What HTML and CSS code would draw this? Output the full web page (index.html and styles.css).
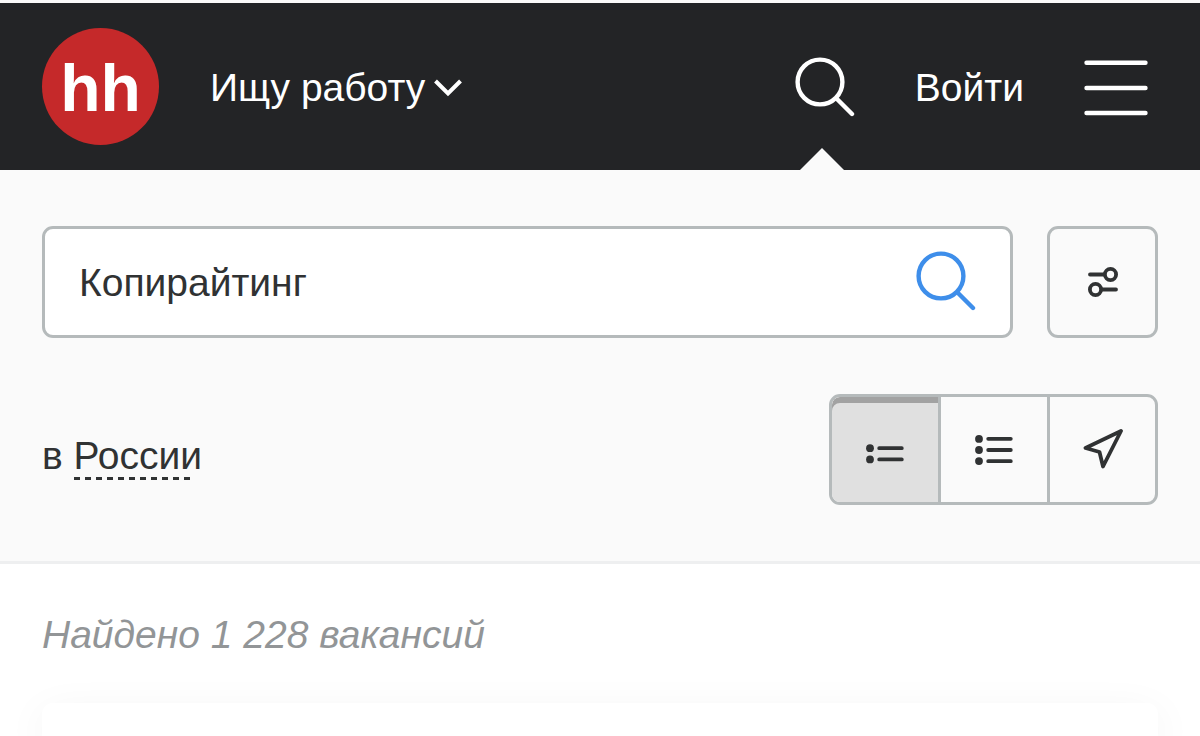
FILE: index.html
```html
<!DOCTYPE html>
<html lang="ru">
<head>
    <meta charset="UTF-8">
    <meta name="viewport" content="width=device-width, initial-scale=1.0">
    <title>Работа копирайтером в России</title>
    <link rel="stylesheet" href="styles.css">
</head>
<body>
    <header class="header">
        <a href="#" class="logo">hh</a>
        <button type="button" class="role-switch">
            Ищу работу
            <svg width="28" height="20" viewBox="0 0 28 20" fill="none" stroke="currentColor" stroke-width="4">
                <path d="M1.500 3 14 15.500 26.500 3"/>
            </svg>
        </button>

        <nav class="header-nav">
            <button type="button" class="nav-search" aria-label="Поиск">
                <svg width="60" height="62" viewBox="0 0 60 62" fill="none" stroke="currentColor" stroke-width="4.4" stroke-linecap="round">
                    <circle cx="25" cy="25" r="22.4"/>
                    <path d="M41.500 41.500 57 57"/>
                </svg>
            </button>
            <a href="#" class="login">Войти</a>
            <button type="button" class="burger" aria-label="Меню">
                <svg width="64" height="56" viewBox="0 0 64 56" fill="none" stroke="currentColor" stroke-width="4.4" stroke-linecap="round">
                    <path d="M2.500 2.700h59M2.500 28h59M2.500 53h59"/>
                </svg>
            </button>
        </nav>
    </header>

    <section class="search-panel">
        <form class="search-row">
            <div class="search-box">
                <input type="text" value="Копирайтинг" aria-label="Профессия, должность или компания">
                <button type="button" class="search-submit" aria-label="Найти">
                    <svg width="60" height="62" viewBox="0 0 60 62" fill="none" stroke="currentColor" stroke-width="4.4" stroke-linecap="round">
                        <circle cx="25" cy="25" r="22.4"/>
                        <path d="M41.500 41.500 57 57"/>
                    </svg>
                </button>
            </div>
            <button type="button" class="filter-btn" aria-label="Фильтры">
                <svg width="30" height="30" viewBox="0 0 30 30" fill="none" stroke="currentColor" stroke-width="3.8" stroke-linecap="round">
                    <circle cx="22.5" cy="7.5" r="5.6"/>
                    <circle cx="7.5" cy="22.5" r="5.6"/>
                    <path d="M2 7.500h14M14 22.500h14"/>
                </svg>
            </button>
        </form>

        <div class="region-row">
            <p class="region">в <a href="#">России</a></p>
            <div class="view-switch">
                <button type="button" class="active" aria-label="Кратко">
                    <svg width="38" height="20" viewBox="0 0 38 20" fill="none" stroke="currentColor" stroke-width="3.8" stroke-linecap="round">
                        <path d="M13.200 4.200h22.600M13.200 15.400h22.600"/>
                        <circle cx="4" cy="4.2" r="3.9" fill="currentColor" stroke="none"/>
                        <circle cx="4" cy="15.4" r="3.9" fill="currentColor" stroke="none"/>
                    </svg>
                </button>
                <button type="button" aria-label="Подробно">
                    <svg width="38" height="30" viewBox="0 0 38 30" fill="none" stroke="currentColor" stroke-width="3.8" stroke-linecap="round">
                        <path d="M13.200 3.800h22.600M13.200 15h22.600M13.200 26.200h22.600"/>
                        <circle cx="4" cy="3.9" r="3.9" fill="currentColor" stroke="none"/>
                        <circle cx="4" cy="15" r="3.9" fill="currentColor" stroke="none"/>
                        <circle cx="4" cy="26.1" r="3.9" fill="currentColor" stroke="none"/>
                    </svg>
                </button>
                <button type="button" aria-label="На карте">
                    <svg width="40" height="42" viewBox="0 0 40 42" fill="none" stroke="currentColor" stroke-width="3.8" stroke-linecap="round" stroke-linejoin="round">
                        <path d="M38 2 2.500 19l14 4L20 37.500z"/>
                    </svg>
                </button>
            </div>
        </div>
    </section>

    <main class="results">
        <h1>Найдено 1 228 вакансий</h1>
        <div class="card"></div>
    </main>
</body>
</html>
```
FILE: styles.css
```css
:root {
    --dark: #232426;
    --text: #303233;
    --muted: #929597;
    --border: #b5babb;
    --panel: #fafafa;
    --red: #c5292a;
    --blue: #3e8eea;
}

* {
    box-sizing: border-box;
}

body {
    font-family: "Liberation Sans", Arial, sans-serif;
    font-size: 39px;
    line-height: 44px;
    color: var(--text);
    background-color: #fff;
    margin: 0;
    min-height: 100vh;
    display: flex;
    flex-direction: column;
}

button,
input {
    font: inherit;
    color: inherit;
    background: none;
    border: none;
    margin: 0;
    padding: 0;
}

button {
    cursor: pointer;
    display: flex;
    align-items: center;
    justify-content: center;
}

svg {
    display: block;
    flex: none;
}

.header {
    display: flex;
    align-items: stretch;
    height: 170px;
    padding: 0 52px 0 42px;
    border-top: 3px solid var(--panel);
    background-color: var(--dark);
    color: #fff;
}

.logo {
    align-self: center;
    width: 117px;
    height: 117px;
    border-radius: 50%;
    background-color: var(--red);
    color: #fff;
    font-size: 66px;
    font-weight: bold;
    line-height: 120px;
    text-align: center;
    text-decoration: none;
}

.role-switch {
    gap: 9px;
    margin-left: 51px;
    padding-top: 2px;
}

.header-nav {
    display: flex;
    align-items: center;
    gap: 60px;
    margin-left: auto;
    padding-top: 2px;
}

.nav-search {
    position: relative;
    align-self: stretch;
}

/* pointer to the open search panel */
.nav-search::after {
    content: "";
    position: absolute;
    bottom: 0;
    left: 50%;
    margin-left: -25px;
    border: 22px solid transparent;
    border-top: none;
    border-bottom-color: var(--panel);
}

.login {
    color: #fff;
    text-decoration: none;
}

.search-panel {
    padding: 56px 42px;
    background-color: var(--panel);
    border-bottom: 3px solid #eeeff0;
}

.search-row {
    display: flex;
    gap: 34px;
}

.search-box {
    flex: 1;
    display: flex;
    height: 112px;
    padding: 0 34px;
    background-color: #fff;
    border: 3px solid var(--border);
    border-radius: 11px;
}

.search-box input {
    flex: 1;
    min-width: 0;
    padding-top: 2px;
    outline: none;
}

.search-submit {
    color: var(--blue);
}

.filter-btn {
    width: 111px;
    height: 112px;
    border: 3px solid var(--border);
    border-radius: 11px;
}

.region-row {
    display: flex;
    justify-content: space-between;
    align-items: center;
    margin-top: 56px;
}

.region {
    margin: 12px 0 0;
}

.region a {
    position: relative;
    color: inherit;
    text-decoration: none;
}

.region a::after {
    content: "";
    position: absolute;
    left: 0;
    right: 8px;
    bottom: -3px;
    height: 3px;
    background: repeating-linear-gradient(to right, currentColor 0 6px, transparent 6px 11px);
}

.view-switch {
    display: flex;
    border: 3px solid var(--border);
    border-radius: 11px;
    overflow: hidden;
}

.view-switch button {
    width: 109px;
    height: 105px;
}

.view-switch button + button {
    border-left: 3px solid var(--border);
}

.view-switch button:last-child {
    width: 108px;
}

.view-switch .active {
    width: 106px;
    padding-top: 9px;
    background-color: #e0e0e0;
    box-shadow: inset 0 6px 0 #a2a2a2;
    border-top-left-radius: 8px;
}

.results {
    flex: 1;
    display: flex;
    flex-direction: column;
    padding: 49px 42px 0;
    overflow: hidden;
}

h1 {
    margin: 0 0 46px;
    font-size: 39px;
    font-weight: normal;
    font-style: italic;
    line-height: 44px;
    color: var(--muted);
}

.card {
    flex: 1;
    border-radius: 11px 11px 0 0;
    background-color: #fff;
    box-shadow: 0 11px 44px rgba(0, 0, 0, 0.06);
}
```
